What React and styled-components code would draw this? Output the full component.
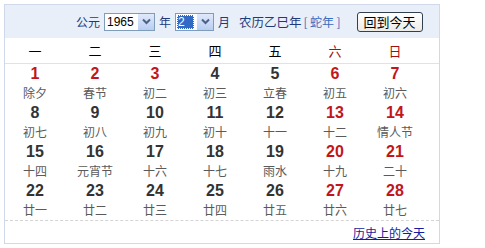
import React from "react";
import styled, { createGlobalStyle } from "styled-components";

const Global = createGlobalStyle`
  body {
    margin: 0;
    padding: 4px;
    background: #fff;
    font-family: "Liberation Sans", Arial, "Noto Sans CJK SC", sans-serif;
  }
`;

const Box = styled.div`
  width: 434px;
  height: 238px;
  border: 1px solid #cfd9ea;
  display: flex;
  flex-direction: column;
`;

const Header = styled.div`
  height: 33px;
  background: #e9eff8;
  display: flex;
  align-items: center;
  padding-left: 71px;
  font-size: 12px;
  color: #1f3a7a;
  font-family: "Noto Sans CJK SC", sans-serif;
  .lbl {
    margin-right: 4px;
  }
  .lunar {
    margin-left: 9px;
    font-size: 12.5px;
    color: #1f3a7a;
  }
  .zodiac {
    margin-left: 2px;
    color: #3a6cc0;
  }
`;

const Select = styled.div`
  width: ${(p) => p.w}px;
  height: 18px;
  border: 1px solid #7f9db9;
  background: #fff;
  display: flex;
  align-items: center;
  margin-right: 4px;
  box-sizing: border-box;
  .val {
    flex: 1;
    padding-left: 2px;
    font-family: "Liberation Sans", Arial, sans-serif;
    font-size: 12px;
    color: #000;
  }
  .sel {
    flex: none;
    width: 16px;
    height: 14px;
    margin-left: 1px;
    background: #316ac5;
    color: #fff;
    outline: 1px dotted #fff;
    outline-offset: -1px;
    padding-left: 1px;
    line-height: 14px;
    margin-right: auto;
  }
`;

const Arrow = styled.div`
  width: 16px;
  height: 16px;
  background: linear-gradient(#dfe9fb, #b9cdf3);
  border-left: 1px solid #fff;
  display: flex;
  align-items: center;
  justify-content: center;
`;

const Button = styled.div`
  margin-left: 16px;
  height: 18px;
  padding: 0 6px;
  border: 1px solid #33404f;
  border-radius: 3px;
  background: linear-gradient(#ffffff, #ecebe6);
  color: #000;
  font-size: 13px;
  line-height: 18px;
`;

const Week = styled.div`
  display: grid;
  grid-template-columns: repeat(7, 60px);
  height: 25px;
  border-bottom: 1px solid #dde3ec;
  align-items: center;
  font-family: "Noto Sans CJK SC", sans-serif;
  font-size: 13px;
`;

const WeekDay = styled.div`
  text-align: center;
  color: ${(p) => (p.red ? "#a01010" : "#000")};
`;

const Days = styled.div`
  display: grid;
  grid-template-columns: repeat(7, 60px);
  grid-auto-rows: 39px;
  border-bottom: 1px dashed #d4d4d4;
`;

const Cell = styled.div`
  text-align: center;
  .num {
    height: 20px;
    line-height: 20px;
    font-size: 16px;
    font-weight: bold;
    color: ${(p) => (p.red ? "#c0161c" : "#333")};
  }
  .lunar {
    height: 17px;
    line-height: 17px;
    font-size: 12px;
    color: #5a5a5a;
    font-family: "Noto Sans CJK SC", sans-serif;
  }
`;

const Footer = styled.div`
  flex: 1;
  display: flex;
  justify-content: flex-end;
  align-items: center;
  padding-right: 14px;
  a {
    font-family: "Noto Sans CJK SC", sans-serif;
    font-size: 12px;
    color: #1a1aa0;
    text-decoration: underline;
  }
`;

const Chevron = () => (
  <svg width="9" height="7" viewBox="0 0 9 7">
    <path d="M1 1.5 L4.5 5 L8 1.5" stroke="#4d6185" strokeWidth="2" fill="none" />
  </svg>
);

const weeks = ["一", "二", "三", "四", "五", "六", "日"];
const lunar = [
  "除夕", "春节", "初二", "初三", "立春", "初五", "初六",
  "初七", "初八", "初九", "初十", "十一", "十二", "情人节",
  "十四", "元宵节", "十六", "十七", "雨水", "十九", "二十",
  "廿一", "廿二", "廿三", "廿四", "廿五", "廿六", "廿七",
];
const redDays = [1, 2, 3];

export default function App() {
  return (
    <>
      <Global />
      <Box>
        <Header>
          <span className="lbl">公元</span>
          <Select w={51}>
            <span className="val">1965</span>
            <Arrow>
              <Chevron />
            </Arrow>
          </Select>
          <span className="lbl">年</span>
          <Select w={39}>
            <span className="val sel">2</span>
            <Arrow>
              <Chevron />
            </Arrow>
          </Select>
          <span>月</span>
          <span className="lunar">农历乙巳年</span>
          <span className="zodiac">[{"\u2009"}蛇年{"\u2009"}]</span>
          <Button>回到今天</Button>
        </Header>
        <Week>
          {weeks.map((w, i) => (
            <WeekDay key={w} red={i >= 5}>
              {w}
            </WeekDay>
          ))}
        </Week>
        <Days>
          {lunar.map((l, i) => {
            const d = i + 1;
            const red = i % 7 >= 5 || redDays.includes(d);
            return (
              <Cell key={d} red={red}>
                <div className="num">{d}</div>
                <div className="lunar">{l}</div>
              </Cell>
            );
          })}
        </Days>
        <Footer>
          <a href="#">历史上的今天</a>
        </Footer>
      </Box>
    </>
  );
}
